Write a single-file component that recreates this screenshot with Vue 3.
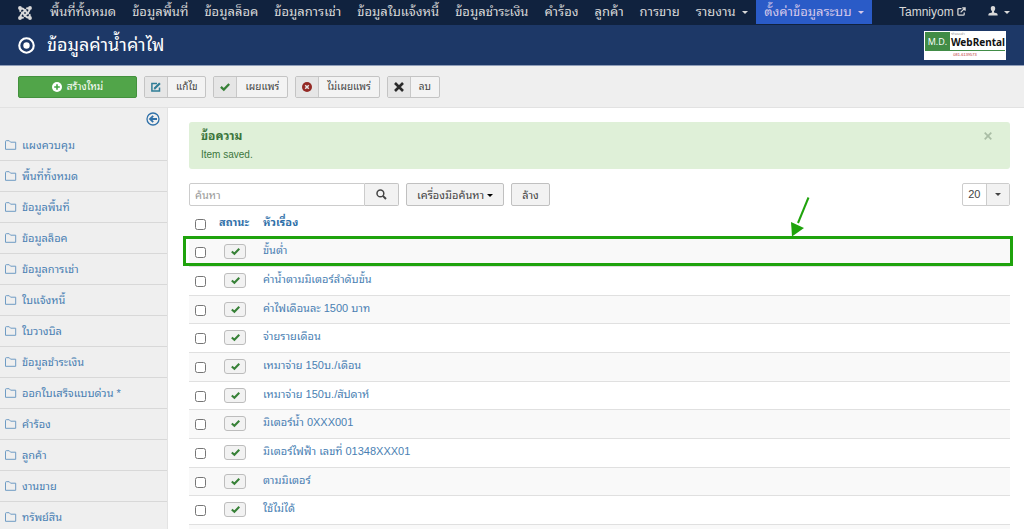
<script setup>
import { ref } from 'vue'

const navItems = [
  'พื้นที่ทั้งหมด', 'ข้อมูลพื้นที่', 'ข้อมูลล็อค', 'ข้อมูลการเช่า', 'ข้อมูลใบแจ้งหนี้',
  'ข้อมูลชำระเงิน', 'คำร้อง', 'ลูกค้า', 'การขาย',
]
const sideItems = [
  'แผงควบคุม', 'พื้นที่ทั้งหมด', 'ข้อมูลพื้นที่', 'ข้อมูลล็อค', 'ข้อมูลการเช่า', 'ใบแจ้งหนี้', 'ใบวางบิล',
  'ข้อมูลชำระเงิน', 'ออกใบเสร็จแบบด่วน *', 'คำร้อง', 'ลูกค้า', 'งานขาย', 'ทรัพย์สิน',
]
const rows = [
  'ขั้นต่ำ', 'ค่าน้ำตามมิเตอร์ลำดับขั้น', 'ค่าไฟเดือนละ 1500 บาท', 'จ่ายรายเดือน', 'เหมาจ่าย 150บ./เดือน',
  'เหมาจ่าย 150บ./สัปดาห์', 'มิเตอร์น้ำ 0XXX001', 'มิเตอร์ไฟฟ้า เลขที่ 01348XXX01', 'ตามมิเตอร์', 'ใช้ไม่ได้',
]
const tools = [
  { label: 'แก้ไข', icon: 'edit' },
  { label: 'เผยแพร่', icon: 'check' },
  { label: 'ไม่เผยแพร่', icon: 'cancel' },
  { label: 'ลบ', icon: 'cross' },
]
const search = ref('')
const selected = ref([])
</script>

<template>
  <div class="page">
    <nav class="topnav">
      <a class="brand" href="#" aria-label="Joomla">
        <svg viewBox="0 0 16 16" width="14" height="14" fill="none" stroke="currentColor" stroke-width="2.1">
          <path d="M2.9 6.6 C1.6 3.6 4.4 1.7 6.8 4 L12 9.2" />
          <path d="M9.4 2.9 C12.4 1.6 14.3 4.4 12 6.8 L6.8 12" />
          <path d="M13.1 9.4 C14.4 12.4 11.6 14.3 9.2 12 L4 6.8" />
          <path d="M6.6 13.1 C3.6 14.4 1.7 11.6 4 9.2 L9.2 4" />
          <g fill="currentColor" stroke="none">
            <circle cx="2.3" cy="2.3" r="2.2" /><circle cx="13.7" cy="2.3" r="2.2" />
            <circle cx="2.3" cy="13.7" r="2.2" /><circle cx="13.7" cy="13.7" r="2.2" />
          </g>
        </svg>
      </a>
      <a v-for="item in navItems" :key="item" href="#">{{ item }}</a>
      <a href="#">รายงาน <i class="caret"></i></a>
      <a href="#" class="active">ตั้งค่าข้อมูลระบบ <i class="caret"></i></a>
      <span class="spacer"></span>
      <a href="#" class="site">Tamniyom
        <svg viewBox="0 0 10 10" width="9" height="9" fill="none" stroke="currentColor" stroke-width="1.4">
          <path d="M5 1.7H2A1 1 0 0 0 1 2.7V8A1 1 0 0 0 2 9H7A1 1 0 0 0 8 8V6" />
          <path d="M4 6L8.6 1.4M5.8 1H9V4.2" />
        </svg>
      </a>
      <a href="#" class="user" aria-label="User">
        <svg viewBox="0 0 10 10" width="10" height="10" fill="currentColor">
          <path d="M5 0C3.4 0 2.6 1.2 2.8 2.8C2.9 4 3.4 4.8 4 5.3V6.4L1.2 7.3Q.3 7.7.3 9.5H9.7Q9.7 7.7 8.8 7.3L6 6.4V5.3C6.6 4.8 7.1 4 7.2 2.8C7.4 1.2 6.6 0 5 0Z" />
        </svg>
        <i class="caret"></i>
      </a>
    </nav>

    <header class="titlebar">
      <svg viewBox="0 0 16 16" width="17" height="17">
        <circle cx="8" cy="8" r="6.8" fill="none" stroke="#fff" stroke-width="2" />
        <circle cx="8" cy="8" r="3" fill="#fff" />
      </svg>
      <h1>ข้อมูลค่าน้ำค่าไฟ</h1>
      <div class="logo">
        <div class="logo-top">
          <span class="md">M.D.</span>
          <span class="names"><small>ระบบเช่า</small><b>WebRental</b></span>
        </div>
        <div class="phone">081-6139573</div>
      </div>
    </header>

    <div class="toolbar">
      <button class="new" type="button">
        <svg viewBox="0 0 10 10" width="10" height="10">
          <circle cx="5" cy="5" r="5" fill="#fff" />
          <path d="M5 2.2V7.8M2.2 5H7.8" stroke="#46a546" stroke-width="1.6" />
        </svg>
        สร้างใหม่
      </button>
      <button v-for="t in tools" :key="t.icon" class="tool" type="button">
        <span class="ticon">
          <svg v-if="t.icon === 'edit'" viewBox="0 0 10 10" width="10" height="10" fill="none" stroke="#2f7d96">
            <path d="M6 1.5H.9V9.1H8.5V5.5" stroke-width="1.5" />
            <path d="M3.6 6.6L8.9 1.2" stroke-width="2.2" />
            <path d="M2.7 7.6L3 5.6L4.7 7.2Z" fill="#2f7d96" stroke="none" />
          </svg>
          <svg v-else-if="t.icon === 'check'" viewBox="0 0 10 10" width="10" height="10" fill="none" stroke="#378137" stroke-width="2.3">
            <path d="M.9 4.9L3.8 7.6L9.2 2" />
          </svg>
          <svg v-else-if="t.icon === 'cancel'" viewBox="0 0 10 10" width="10" height="10">
            <circle cx="5" cy="5" r="5" fill="#942a25" />
            <path d="M3.2 3.2L6.8 6.8M6.8 3.2L3.2 6.8" stroke="#e6e6e6" stroke-width="1.5" />
          </svg>
          <svg v-else viewBox="0 0 10 10" width="10" height="10" stroke="#2b2b2b" stroke-width="2.6">
            <path d="M1 1L9 9M9 1L1 9" />
          </svg>
        </span>
        <span class="tlabel">{{ t.label }}</span>
      </button>
    </div>

    <div class="body">
      <aside class="sidebar">
        <button class="collapse" type="button" aria-label="Toggle sidebar">
          <svg viewBox="0 0 14 14" width="14" height="14" fill="none" stroke="#3071a9">
            <circle cx="7" cy="7" r="6" stroke-width="1.3" />
            <path d="M11 7H4.4M7.2 3.8L4 7L7.2 10.2" stroke-width="1.8" />
          </svg>
        </button>
        <a v-for="item in sideItems" :key="item" href="#">
          <svg viewBox="0 0 12 10" width="12" height="10" fill="none" stroke="#6f9cc4">
            <path d="M.5 9.3V1.5Q.5 .7 1.3 .7H4.2L5.6 2.2H10.7V9.3Z" />
          </svg>
          {{ item }}
        </a>
      </aside>

      <main class="content">
        <div class="alert">
          <button class="close" type="button" aria-label="Close">
            <svg viewBox="0 0 8 8" width="8" height="8" stroke="#a9bda5" stroke-width="1.7"><path d="M.7 .7L7.3 7.3M7.3 .7L.7 7.3" /></svg>
          </button>
          <h2>ข้อความ</h2>
          <p>Item saved.</p>
        </div>

        <div class="filters">
          <div class="search">
            <input v-model="search" type="text" placeholder="ค้นหา" aria-label="ค้นหา" />
            <button type="button" aria-label="Search">
              <svg viewBox="0 0 11 11" width="11" height="11" fill="none" stroke="#444">
                <circle cx="4.4" cy="4.4" r="3.4" stroke-width="1.5" />
                <path d="M6.9 6.9L10 10" stroke-width="2" />
              </svg>
            </button>
          </div>
          <button class="btn" type="button">เครื่องมือค้นหา <i class="caret"></i></button>
          <button class="btn" type="button">ล้าง</button>
          <span class="spacer"></span>
          <button class="limit" type="button"><span>20</span><span class="arrow"><i class="caret"></i></span></button>
        </div>

        <div class="list">
          <table>
            <thead>
              <tr>
                <th class="c-check"><input type="checkbox" aria-label="เลือกทั้งหมด" /></th>
                <th class="c-state"><a href="#">สถานะ</a></th>
                <th><a href="#">หัวเรื่อง</a></th>
              </tr>
            </thead>
            <tbody>
              <tr v-for="(row, i) in rows" :key="row">
                <td class="c-check"><input v-model="selected" type="checkbox" :value="i" :aria-label="row" /></td>
                <td class="c-state">
                  <button class="state" type="button" aria-label="เผยแพร่">
                    <svg viewBox="0 0 10 10" width="9" height="9" fill="none" stroke="#378137" stroke-width="2.3">
                      <path d="M.9 4.9L3.8 7.6L9.2 2" />
                    </svg>
                  </button>
                </td>
                <td><a href="#">{{ row }}</a></td>
              </tr>
              <tr class="tail"><td colspan="3"></td></tr>
            </tbody>
          </table>
          <div class="highlight"></div>
          <svg class="pointer" viewBox="0 0 20 40" width="20" height="40">
            <path d="M17.5 .5L7 26" stroke="#1fa30c" stroke-width="2" />
            <path d="M0 25L13 31L1 39.5Z" fill="#1fa30c" />
          </svg>
        </div>
      </main>
    </div>
  </div>
</template>

<style>
body { margin: 0; background: #fff; }
</style>

<style scoped>
.page {
  display: flex;
  flex-direction: column;
  height: 100vh;
  overflow: hidden;
  color: #444;
  font: 11px/14px "Liberation Sans", "Noto Sans Thai Looped", sans-serif;
}
.page *, .page *::before { box-sizing: border-box; }
a { color: #4a7fb3; text-decoration: none; }
button { font: inherit; color: inherit; margin: 0; padding: 0; cursor: pointer; }
svg { flex: none; }
.spacer { flex: 1; }
.caret {
  display: inline-block;
  border: 3px solid transparent;
  border-top-color: currentColor;
  border-bottom: 0;
  vertical-align: middle;
  margin-left: 3px;
}

.topnav {
  display: flex;
  flex: none;
  height: 25px;
  padding: 0 8px 0 10px;
  background: #10223e;
  font-size: 13px;
  line-height: 24px;
  white-space: nowrap;
}
.topnav a { padding: 0 8px; color: #d9d9d9; }
.topnav .brand { display: flex; align-items: center; margin-right: 2px; }
.topnav .active { height: 24px; background: #2a5bc7; color: #d5c8ea; }
.topnav .site { padding: 0 16px 0 12px; font-size: 12px; }
.topnav .user { padding: 0 6px; font-size: 12px; }
.topnav .user .caret { margin-left: 6px; }

.titlebar {
  display: flex;
  flex: none;
  align-items: center;
  height: 41px;
  padding: 0 18px;
  gap: 12px;
  background: #1d3867;
  border-bottom: 1px solid #8f9db8;
}
h1 { margin: 0; flex: 1; color: #fff; font-size: 18px; line-height: 36px; font-weight: 400; }
.logo { width: 82px; background: #fff; border: 1px solid #fff; }
.logo-top { display: flex; height: 19px; border-bottom: 1px solid #418c46; }
.md { width: 25px; background: #418c46; color: #fff; font: 9px/20px "Open Sans", sans-serif; text-align: center; }
.names { display: flex; flex: 1; flex-direction: column; padding-left: 1px; color: #111; }
.names small { color: #999; font-size: 4px; line-height: 4px; }
.names b { font: 700 10px/13px "Noto Sans", sans-serif; }
.phone { color: #b33; font-size: 4px; line-height: 8px; text-align: center; }

.toolbar {
  display: flex;
  flex: none;
  gap: 7px;
  height: 42px;
  padding: 10px 18px;
  background: #efefef;
  border-bottom: 1px solid #e2e2e2;
  font-size: 10px;
}
.new {
  display: flex;
  align-items: center;
  justify-content: center;
  gap: 5px;
  width: 119px;
  height: 22px;
  color: #fff;
  background: #51a549;
  border: 1px solid #43913d;
  border-radius: 2px;
}
.tool {
  display: flex;
  height: 22px;
  background: #f3f3f3;
  border: 1px solid #c4c4c4;
  border-radius: 2px;
}
.ticon { display: flex; align-items: center; justify-content: center; width: 23px; height: 20px; background: #e6e6e6; border-right: 1px solid #c8c8c8; }
.tlabel { padding: 0 8px; line-height: 20px; }

.body { display: flex; flex: 1; min-height: 0; }
.sidebar { flex: none; width: 168px; background: #efefef; border-right: 1px solid #e3e3e3; overflow: hidden; }
.collapse { display: block; margin: 4px 7px 4px auto; width: 14px; height: 14px; border: 0; background: none; }
.sidebar a {
  display: flex;
  align-items: center;
  gap: 5px;
  height: 31px;
  padding: 0 5px;
  border-bottom: 1px solid #d8d8d8;
}

.content { flex: 1; padding: 14px 14px 0 21px; }
.alert { height: 47px; padding: 6px 12px; background: #dff0d8; border-radius: 3px; color: #3c763d; }
.alert h2 { margin: 0 0 4px; font-size: 12px; line-height: 16px; }
.alert p { margin: 0; font-size: 10px; line-height: 13px; }
.close { float: right; margin: 4px 6px; border: 0; background: none; line-height: 8px; }
.close svg { display: block; }

.filters { display: flex; gap: 7px; margin-top: 14px; }
.search { display: flex; height: 23px; }
.search input {
  width: 176px;
  padding: 0 5px;
  border: 1px solid #ccc;
  border-radius: 2px 0 0 2px;
  font: inherit;
  outline: 0;
}
.search input::placeholder { color: #999; opacity: 1; }
.search button { width: 34px; background: #f2f2f2; border: 1px solid #c4c4c4; border-left: 0; border-radius: 0 2px 2px 0; }
.search button svg { display: block; margin: auto; }
.btn { height: 23px; padding: 0 10px; background: #f2f2f2; border: 1px solid #c0c0c0; border-radius: 2px; }
.btn .caret { color: #000; margin-left: 0; }
.limit { display: flex; width: 48px; height: 23px; padding: 0; background: #fff; border: 1px solid #ccc; border-radius: 2px; line-height: 21px; }
.limit span { flex: 1; }
.limit .arrow { border-left: 1px solid #ccc; background: #f2f2f2; }
.limit .caret { display: block; width: 6px; margin: 9px auto 0; }

.list { position: relative; margin-top: 2px; }
table { width: 100%; border-collapse: collapse; }
th, td { padding: 0; text-align: left; vertical-align: top; line-height: 25px; }
thead tr { height: 29px; }
tbody td { height: 29px; border-top: 1px solid #e0e0e0; }
tbody tr:nth-child(3n) td { height: 28px; }
tbody tr:nth-child(odd) td { background: #f9f9f9; }
th { font-size: 11px; line-height: 28px; }
th a { color: #3071a9; }
.c-check { width: 30px; }
.c-check input { display: block; width: 11px; height: 11px; margin: 9px 6px 0; }
th.c-check input { margin-top: 11px; }
.c-state { width: 44px; }
.state { display: flex; align-items: center; justify-content: center; width: 22px; height: 15px; margin: 6px 5px 0; background: #f2f2f2; border: 1px solid #bdbdbd; border-radius: 3px; }

.highlight { position: absolute; top: 28px; left: -6px; right: -3px; height: 30px; border: 3px solid #1fa30c; }
.pointer { position: absolute; top: -11px; right: 199px; }
</style>
